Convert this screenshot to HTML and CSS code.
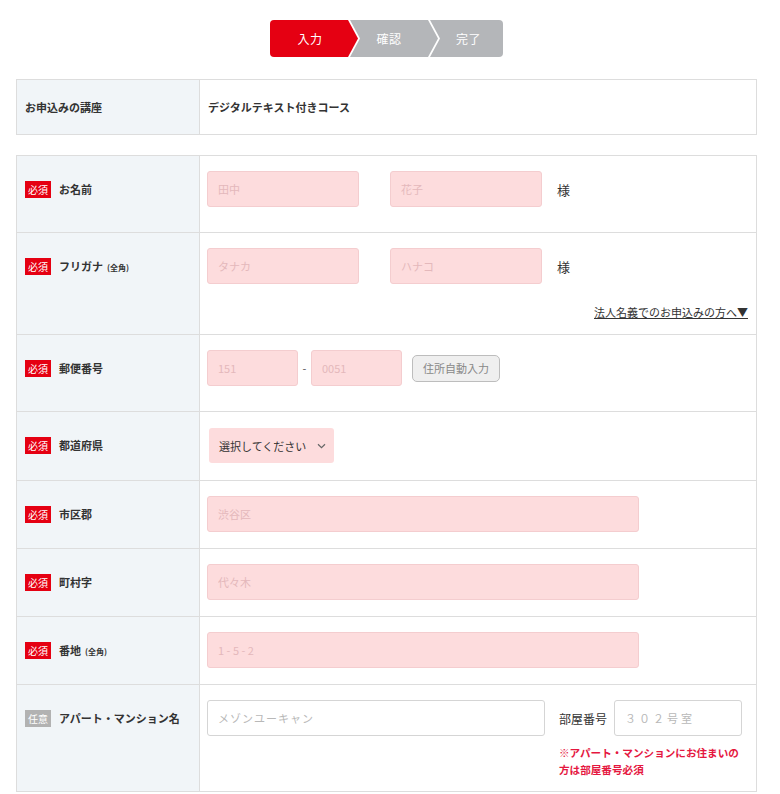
FILE: index.html
```html
<!DOCTYPE html>
<html lang="ja">
<head>
<meta charset="utf-8">
<title>お申込みフォーム</title>
<link rel="stylesheet" href="styles.css">
</head>
<body>
<div class="page">
  <div class="steps-wrap">
    <ol class="steps">
      <li class="step step-first is-current">入力</li>
      <li class="step step-mid">確認</li>
      <li class="step step-last">完了</li>
    </ol>
  </div>

  <div class="tbl tbl-course">
    <div class="row">
      <div class="th th-center">お申込みの講座</div>
      <div class="td td-center"><span class="course">デジタルテキスト付きコース</span></div>
    </div>
  </div>

  <div class="tbl tbl-form">
    <div class="row">
      <div class="th"><div class="lab"><span class="badge">必須</span><span class="lab-text">お名前</span></div></div>
      <div class="td td-err">
        <div class="line">
          <input class="in in-pink in-name" placeholder="田中">
          <input class="in in-pink in-name in-name2" placeholder="花子">
          <span class="sama">様</span>
        </div>
      </div>
    </div>

    <div class="row">
      <div class="th"><div class="lab"><span class="badge">必須</span><span class="lab-text">フリガナ<small>(全角)</small></span></div></div>
      <div class="td td-kana">
        <div class="line">
          <input class="in in-pink in-name" placeholder="タナカ">
          <input class="in in-pink in-name in-name2" placeholder="ハナコ">
          <span class="sama">様</span>
        </div>
        <div class="corp"><a href="#" class="corp-link">法人名義でのお申込みの方へ▼</a></div>
      </div>
    </div>

    <div class="row">
      <div class="th"><div class="lab"><span class="badge">必須</span><span class="lab-text">郵便番号</span></div></div>
      <div class="td td-err">
        <div class="line">
          <input class="in in-pink in-zip" placeholder="151">
          <span class="dash">-</span>
          <input class="in in-pink in-zip" placeholder="0051">
          <button class="btn-auto" type="button">住所自動入力</button>
        </div>
      </div>
    </div>

    <div class="row">
      <div class="th"><div class="lab"><span class="badge">必須</span><span class="lab-text">都道府県</span></div></div>
      <div class="td">
        <div class="line">
          <div class="select"><span>選択してください</span>
            <svg class="chev" width="9" height="6" viewBox="0 0 9 6"><path d="M1 1.2 L4.5 4.6 L8 1.2" fill="none" stroke="#666" stroke-width="1.2"/></svg>
          </div>
        </div>
      </div>
    </div>

    <div class="row">
      <div class="th"><div class="lab"><span class="badge">必須</span><span class="lab-text">市区郡</span></div></div>
      <div class="td"><div class="line"><input class="in in-pink in-wide" placeholder="渋谷区"></div></div>
    </div>

    <div class="row">
      <div class="th"><div class="lab"><span class="badge">必須</span><span class="lab-text">町村字</span></div></div>
      <div class="td"><div class="line"><input class="in in-pink in-wide" placeholder="代々木"></div></div>
    </div>

    <div class="row">
      <div class="th"><div class="lab"><span class="badge">必須</span><span class="lab-text">番地<small>(全角)</small></span></div></div>
      <div class="td"><div class="line"><input class="in in-pink in-wide in-spaced" placeholder="1-5-2"></div></div>
    </div>

    <div class="row">
      <div class="th"><div class="lab"><span class="badge badge-opt">任意</span><span class="lab-text">アパート・マンション名</span></div></div>
      <div class="td td-apt">
        <input class="in in-white in-apt" placeholder="メゾンユーキャン">
        <div class="room">
          <div class="line">
            <span class="room-label">部屋番号</span>
            <input class="in in-white in-room" placeholder="３０２号室">
          </div>
          <p class="note">※アパート・マンションにお住まいの<br>方は部屋番号必須</p>
        </div>
      </div>
    </div>
  </div>
</div>
</body>
</html>
```
FILE: styles.css
```css
* { box-sizing: border-box; }
html, body { margin: 0; padding: 0; background: #fff; }
body {
  font-family: "Noto Sans CJK JP", "Noto Sans", sans-serif;
  color: #333;
  font-size: 11px;
}
.page {
  width: 741px;
  margin-left: 16px;
  padding-top: 20px;
}

/* stepper */
.steps-wrap { display: flex; justify-content: center; margin-bottom: 22px; }
.steps {
  list-style: none; margin: 0; padding: 0;
  display: flex; height: 37px;
}
.step {
  height: 37px;
  display: flex; align-items: center; justify-content: center;
  color: #fff; font-size: 12px; letter-spacing: 0.5px;
  background: #b4b6b9;
}
.step-first {
  width: 88px; padding-right: 10px; padding-left: 2px;
  border-radius: 4px 0 0 4px;
  clip-path: polygon(0 0, 78px 0, 88px 50%, 78px 100%, 0 100%);
}
.step-mid {
  width: 88px; margin-left: -8px; padding-right: 10px;
  clip-path: polygon(0 0, 78px 0, 88px 50%, 78px 100%, 0 100%, 10px 50%);
}
.step-last {
  width: 73px; margin-left: -8px; padding-left: 4px;
  border-radius: 0 4px 4px 0;
  clip-path: polygon(0 0, 100% 0, 100% 100%, 0 100%, 10px 50%);
}
.is-current { background: #e50012; }

/* tables */
.tbl { border: 1px solid #dddddd; }
.tbl-course { margin-bottom: 20px; }
.row {
  display: grid;
  grid-template-columns: 183px 1fr;
  border-top: 1px solid #dddddd;
}
.row:first-child { border-top: 0; }
.th {
  background: #f1f5f8;
  border-right: 1px solid #dddddd;
  padding: 15px 8px;
}
.th-center { display: flex; align-items: center; height: 54px; padding: 0 8px; font-weight: 700; }
.td { padding: 15px 8px 16px 7px; }
.td-center { display: flex; align-items: center; height: 54px; padding: 0 8px; }
.course { font-weight: 700; }
.td-err { padding-bottom: 25px; }
.td-kana { padding-bottom: 14px; }

.lab { display: flex; align-items: center; height: 36px; gap: 8px; }
.lab-text { font-weight: 700; font-size: 11px; }
.lab-text small { font-size: 8px; margin-left: 4px; }
.badge {
  width: 26px; height: 17px;
  display: flex; align-items: center; justify-content: center;
  background: #e50012; color: #fff; font-size: 10px;
}
.badge-opt { background: #b2b2b2; }

.line { display: flex; align-items: center; min-height: 36px; }

.in {
  height: 36px;
  border-radius: 3px;
  font-family: "Noto Sans CJK JP", "Noto Sans", sans-serif;
  font-size: 11px;
  padding: 0 10px;
  outline: none;
  color: #333;
}
.in-pink { background: #fddcdd; border: 1px solid #f4cdcf; }
.in-pink::placeholder { color: #e4b8bb; }
.in-white { background: #fff; border: 1px solid #d5d5d5; }
.in-white::placeholder { color: #b8b8b8; letter-spacing: 1px; }
.in-spaced::placeholder { letter-spacing: 2.5px; }

.in-name { width: 152px; }
.in-name2 { margin-left: 31px; }
.sama { margin-left: 15px; font-size: 13px; color: #333; }

.corp { display: flex; justify-content: flex-end; margin-top: 20px; line-height: 16px; }
.corp-link { color: #333; font-size: 11px; text-decoration: underline; }

.in-zip { width: 91px; }
.dash { width: 13px; text-align: center; color: #555; font-size: 11px; }
.btn-auto {
  margin-left: 10px;
  width: 88px; height: 27px;
  border: 1px solid #bdbdbd; border-radius: 5px;
  background: #efefef; color: #888;
  font-family: "Noto Sans CJK JP", "Noto Sans", sans-serif;
  font-size: 11px; padding: 0;
}

.select {
  margin: 1px 0 1px 2px;
  width: 125px; height: 35px;
  background: #fddcdd; border-radius: 3px;
  display: flex; align-items: center; justify-content: space-between;
  padding: 0 8px 0 10px;
  font-size: 11px; color: #333;
}
.chev { display: block; }

.in-wide { width: 432px; }

.td-apt { display: flex; align-items: flex-start; padding-bottom: 13px; }
.in-apt { width: 338px; flex: none; }
.room { margin-left: 14px; width: 184px; }
.room-label { font-size: 12px; color: #333; width: 55px; flex: none; }
.in-room { width: 128px; }
.in-room::placeholder { letter-spacing: 3px; }
.note {
  margin: 8px 0 0;
  color: #e5173f; font-weight: 700; font-size: 10.6px;
  line-height: 17px; white-space: nowrap;
}
```
